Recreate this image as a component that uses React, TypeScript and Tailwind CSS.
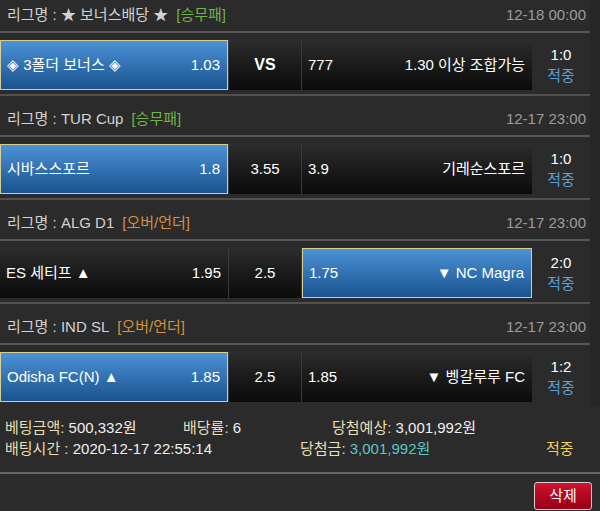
import React from "react";

const FONT = { fontFamily: '"Liberation Sans", "Noto Sans CJK KR", sans-serif' };

type Match = {
  league: string;
  tag: string;
  tagColor: string;
  date: string;
  home: string;
  homeOdds: string;
  draw: string;
  drawBold?: boolean;
  away: string;
  awayOdds: string;
  pick: "home" | "away";
  score: string;
};

const matches: Match[] = [
  {
    league: "★ 보너스배당 ★",
    tag: "[승무패]",
    tagColor: "text-[#6fb544]",
    date: "12-18 00:00",
    home: "◈ 3폴더 보너스 ◈",
    homeOdds: "1.03",
    draw: "VS",
    drawBold: true,
    away: "1.30 이상 조합가능",
    awayOdds: "777",
    pick: "home",
    score: "1:0",
  },
  {
    league: "TUR Cup",
    tag: "[승무패]",
    tagColor: "text-[#6fb544]",
    date: "12-17 23:00",
    home: "시바스스포르",
    homeOdds: "1.8",
    draw: "3.55",
    away: "기레순스포르",
    awayOdds: "3.9",
    pick: "home",
    score: "1:0",
  },
  {
    league: "ALG D1",
    tag: "[오버/언더]",
    tagColor: "text-[#d6923c]",
    date: "12-17 23:00",
    home: "ES 세티프 ▲",
    homeOdds: "1.95",
    draw: "2.5",
    away: "▼ NC Magra",
    awayOdds: "1.75",
    pick: "away",
    score: "2:0",
  },
  {
    league: "IND SL",
    tag: "[오버/언더]",
    tagColor: "text-[#d6923c]",
    date: "12-17 23:00",
    home: "Odisha FC(N) ▲",
    homeOdds: "1.85",
    draw: "2.5",
    away: "▼ 벵갈루루 FC",
    awayOdds: "1.85",
    pick: "home",
    score: "1:2",
  },
];

const SELECTED =
  "bg-gradient-to-b from-[#4d93d6] via-[#3272b3] to-[#1a538f] border border-[#d8cf8e]";
const PLAIN = "bg-gradient-to-b from-[#2c2c2c] to-[#0b0b0b]";

function MatchBlock({ m, first, last }: { m: Match; first: boolean; last: boolean }) {
  return (
    <div>
      <div
        className={`flex items-center justify-between border-b-2 border-[#575757] pl-[7px] pr-[4px] ${
          first ? "h-[33px]" : "h-[41px] pt-[8px]"
        }`}
      >
        <div className="text-[15px] text-[#d2d2d2]">
          리그명 : {m.league}
          <span className={`ml-[8px] ${m.tagColor}`}>{m.tag}</span>
        </div>
        <div className="text-[15px] text-[#9c9c9c]">{m.date}</div>
      </div>

      <div className={`flex pt-[7px] pb-[4px] ${last ? "" : "border-b-2 border-[#505050]"}`}>
        <div
          className={`flex h-[50px] w-[228px] items-center justify-between pl-[6px] pr-[7px] text-[15px] text-white ${
            m.pick === "home" ? SELECTED : PLAIN
          }`}
        >
          <span>{m.home}</span>
          <span>{m.homeOdds}</span>
        </div>
        <div
          className={`flex h-[50px] w-[74px] items-center justify-center border-x border-[#3a3a3a] text-white ${PLAIN} ${
            m.drawBold ? "text-[16px] font-bold" : "text-[15px]"
          }`}
        >
          {m.draw}
        </div>
        <div
          className={`flex h-[50px] w-[230px] items-center justify-between pl-[6px] pr-[7px] text-[15px] text-white ${
            m.pick === "away" ? SELECTED : PLAIN
          }`}
        >
          <span>{m.awayOdds}</span>
          <span>{m.away}</span>
        </div>
        <div className="flex h-[50px] flex-1 flex-col items-center justify-center text-[15px] leading-[21px]">
          <span className="text-white">{m.score}</span>
          <span className="text-[#5c9fd8]">적중</span>
        </div>
      </div>
    </div>
  );
}

export default function App() {
  return (
    <div className="h-[511px] w-[600px] overflow-hidden bg-[#2b2b2b]" style={FONT}>
      <div className="flex">
        <div className="w-[590px]">
          {matches.map((m, i) => (
            <MatchBlock key={i} m={m} first={i === 0} last={i === matches.length - 1} />
          ))}
        </div>
        <div className="flex-1 bg-[#262626]" />
      </div>

      <div className="border-b-2 border-[#666] pb-[13px] pl-[5px] pt-[11px] text-[15px] leading-[21px]">
        <div className="flex">
          <div className="w-[178px]">
            <span className="text-[#e6dfb4]">베팅금액: </span>
            <span className="text-[#efefef]">500,332원</span>
          </div>
          <div className="w-[149px]">
            <span className="text-[#e6dfb4]">배당률: </span>
            <span className="text-[#efefef]">6</span>
          </div>
          <div>
            <span className="text-[#e6dfb4]">당첨예상: </span>
            <span className="text-[#efefef]">3,001,992원</span>
          </div>
        </div>
        <div className="flex">
          <div className="w-[295px]">
            <span className="text-[#e6dfb4]">배팅시간 : </span>
            <span className="text-[#efefef]">2020-12-17 22:55:14</span>
          </div>
          <div className="w-[246px]">
            <span className="text-[#e6dfb4]">당첨금: </span>
            <span className="text-[#5cc6c4]">3,001,992원</span>
          </div>
          <div className="text-[#e6d65a]">적중</div>
        </div>
      </div>

      <div className="flex justify-end pr-[8px] pt-[8px]">
        <button
          type="button"
          className="flex h-[28px] w-[58px] items-center justify-center rounded-[3px] border border-[#d0d0d0] bg-gradient-to-b from-[#d0122e] to-[#980016] text-[15px] text-white"
        >
          삭제
        </button>
      </div>
    </div>
  );
}
